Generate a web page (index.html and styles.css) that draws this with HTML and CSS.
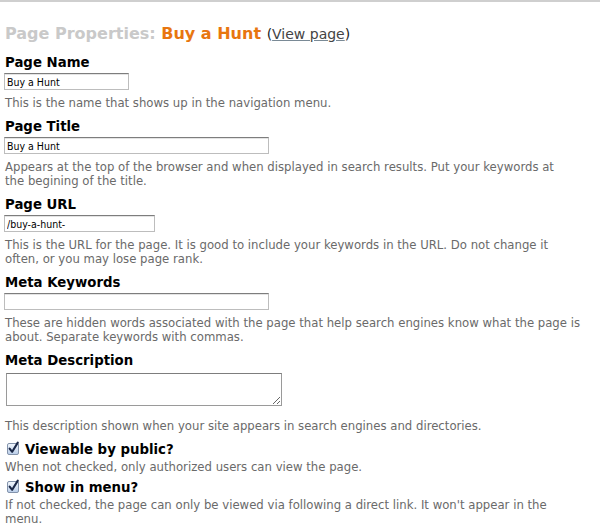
FILE: index.html
```html
<!DOCTYPE html>
<html lang="en">
<head>
<meta charset="utf-8">
<title>Page Properties: Buy a Hunt</title>
<link rel="stylesheet" href="styles.css">
</head>
<body>
<div class="page">
  <h1 class="title"><span class="title-muted">Page Properties:</span> <span class="title-name">Buy a Hunt</span> <span class="title-link">(<a href="#">View page</a>)</span></h1>

  <form class="form">
    <div class="field">
      <label class="label" for="name">Page Name</label>
      <input class="input input-name" id="name" type="text" value="Buy a Hunt">
      <p class="help">This is the name that shows up in the navigation menu.</p>
    </div>

    <div class="field">
      <label class="label" for="ptitle">Page Title</label>
      <input class="input input-wide" id="ptitle" type="text" value="Buy a Hunt">
      <p class="help help-narrow">Appears at the top of the browser and when displayed in search results. Put your keywords at the begining of the title.</p>
    </div>

    <div class="field">
      <label class="label" for="url">Page URL</label>
      <input class="input input-url" id="url" type="text" value="/buy-a-hunt-">
      <p class="help">This is the URL for the page. It is good to include your keywords in the URL. Do not change it often, or you may lose page rank.</p>
    </div>

    <div class="field">
      <label class="label" for="kw">Meta Keywords</label>
      <input class="input input-wide" id="kw" type="text" value="">
      <p class="help">These are hidden words associated with the page that help search engines know what the page is about. Separate keywords with commas.</p>
    </div>

    <div class="field">
      <label class="label" for="desc">Meta Description</label>
      <textarea class="textarea" id="desc"></textarea>
      <p class="help help-after-area">This description shown when your site appears in search engines and directories.</p>
    </div>

    <div class="field field-check">
      <label class="check-label"><span class="check"><svg viewBox="0 0 15 15" width="15" height="15"><defs><linearGradient id="cb1" x1="0" y1="0" x2="0" y2="1"><stop offset="0" stop-color="#f4f8fd"/><stop offset="1" stop-color="#b9cde9"/></linearGradient></defs><rect x="1.5" y="2.5" width="11" height="11" rx="1.5" fill="url(#cb1)" stroke="#8393ab"/><path d="M3.6 7.6 L6.2 10.8 L11.8 1.6" fill="none" stroke="#1b2847" stroke-width="2.1" stroke-linecap="round" stroke-linejoin="round"/></svg></span>Viewable by public?</label>
      <p class="help">When not checked, only authorized users can view the page.</p>
    </div>

    <div class="field field-check">
      <label class="check-label"><span class="check"><svg viewBox="0 0 15 15" width="15" height="15"><defs><linearGradient id="cb2" x1="0" y1="0" x2="0" y2="1"><stop offset="0" stop-color="#f4f8fd"/><stop offset="1" stop-color="#b9cde9"/></linearGradient></defs><rect x="1.5" y="2.5" width="11" height="11" rx="1.5" fill="url(#cb2)" stroke="#8393ab"/><path d="M3.6 7.6 L6.2 10.8 L11.8 1.6" fill="none" stroke="#1b2847" stroke-width="2.1" stroke-linecap="round" stroke-linejoin="round"/></svg></span>Show in menu?</label>
      <p class="help">If not checked, the page can only be viewed via following a direct link. It won't appear in the menu.</p>
    </div>
  </form>
</div>
</body>
</html>
```

FILE: styles.css
```css
html, body {
  margin: 0;
  padding: 0;
  background: #fff;
}

body {
  font-family: "DejaVu Sans", Verdana, sans-serif;
  color: #000;
}

.page {
  border-top: 2px solid #cfcfcf;
  padding: 0 17px 0 4px;
}

.title {
  margin: 22px 0 0 1px;
  font-size: 16px;
  line-height: 20px;
  font-weight: bold;
}

.title-muted {
  color: #c9c9c9;
}

.title-name {
  color: #e8760f;
}

.title-link {
  font-weight: normal;
  font-size: 14px;
  color: #222;
}

.title-link a {
  color: #444;
  text-decoration: underline;
  text-decoration-color: #7a8a96;
}

.form {
  margin: 10px 0 0;
}

.field {
  margin: 0 0 8px;
}

.label {
  display: block;
  margin-left: 1px;
  font-size: 13.3px;
  line-height: 17px;
  font-weight: bold;
  color: #000;
}

.input {
  display: block;
  box-sizing: border-box;
  height: 17px;
  margin: 2px 0 0;
  padding: 0 2px;
  border: 1px solid #bdbdbd;
  border-top-color: #7d7d7d;
  box-shadow: inset 0 1px 0 #e4e4e4;
  font-family: "DejaVu Sans Condensed", "DejaVu Sans", Verdana, sans-serif;
  font-size: 10.5px;
  color: #000;
  background: #fff;
  outline: none;
}

.input-name { width: 125px; }
.input-wide { width: 265px; }
.input-url { width: 151px; }

.textarea {
  display: block;
  box-sizing: border-box;
  width: 276px;
  height: 33px;
  margin: 4px 0 0 2px;
  padding: 2px;
  border: 1px solid #9a9a9a;
  border-top-color: #7d7d7d;
  font-family: "DejaVu Sans", Verdana, sans-serif;
  font-size: 11px;
  resize: both;
}

.help {
  margin: 6px 0 0 1px;
  font-size: 11.7px;
  line-height: 14px;
  color: #6a6a6a;
}

.help-narrow {
  max-width: 562px;
}

.help-after-area {
  margin-top: 13px;
}

.field-check {
  margin-bottom: 4px;
}

.check-label {
  display: flex;
  align-items: center;
  gap: 4px;
  margin-top: 5px;
  font-size: 13.3px;
  line-height: 17px;
  font-weight: bold;
}

.check {
  display: inline-flex;
  width: 15px;
  height: 15px;
  margin-left: 2px;
  margin-top: -2px;
}

.check svg {
  display: block;
}

.field-check .help {
  margin-top: 2px;
}
```
